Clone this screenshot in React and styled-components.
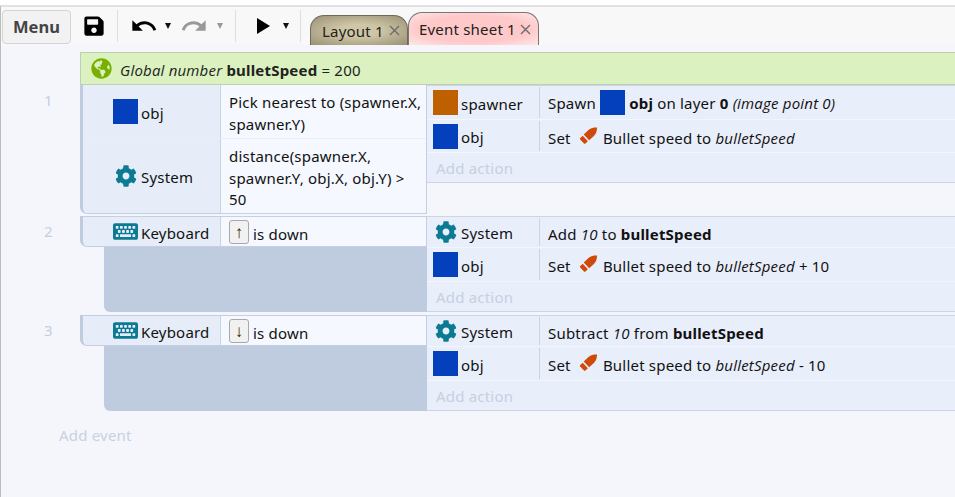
import React from "react";
import styled, { createGlobalStyle } from "styled-components";
import { FaCog, FaKeyboard, FaSave, FaGlobeAmericas } from "react-icons/fa";
import { MdUndo, MdRedo } from "react-icons/md";

const Global = createGlobalStyle`
  *, *::before, *::after { box-sizing: border-box; }
  html, body { margin: 0; padding: 0; background: #fff; }
  body { font-family: "Noto Sans", "Open Sans", sans-serif; font-size: 15px; letter-spacing: 0.2px; color: #111; }
  i { font-family: "Open Sans", "Noto Sans", sans-serif; }
`;

const Page = styled.div`
  width: 955px; height: 497px; overflow: hidden; display: flex; flex-direction: column;
  padding-top: 5px; background: #fff;
`;
const Main = styled.div`
  flex: 1; display: flex; flex-direction: column; border-top: 2px solid #e0e0e6; border-left: 1px solid #bbb;
`;
const Toolbar = styled.div`
  height: 38px; background: #f8f8f8; display: flex; align-items: flex-end; flex: none;
`;
const Tools = styled.div`
  display: flex; align-items: center; height: 38px;
`;
const MenuButton = styled.div`
  width: 69px; height: 34px; margin: 1px 0 0 1px; border: 1px solid #d4d4d4; border-radius: 4px;
  background: #f2f2f2; color: #444; font-weight: 700; font-size: 16.5px; letter-spacing: 0; display: flex; align-items: center; justify-content: center;
`;
const Tool = styled.div`
  display: flex; align-items: center; justify-content: center; color: ${p => p.$off ? "#999" : "#000"};
  width: ${p => p.$w || 24}px; height: 32px; margin-left: ${p => p.$ml || 0}px;
`;
const Caret = styled.div`
  width: 0; height: 0; margin: 0 ${p => p.$mr || 0}px 0 ${p => p.$ml || 0}px; border-left: 3.5px solid transparent; border-right: 3.5px solid transparent;
  border-top: 6px solid ${p => p.$off ? "#999" : "#111"};
`;
const Sep = styled.div`
  width: 1px; height: 32px; background: #ddd;
`;
const Tabs = styled.div`
  display: flex; align-items: flex-end; height: 38px; margin-left: 9px;
`;
const Tab = styled.div`
  display: flex; align-items: center; justify-content: space-between;
  width: ${p => p.$w}px; height: ${p => p.$h}px; padding: 0 7px 0 ${p => p.$pl}px;
  border: 1px solid ${p => p.$active ? "#777" : "#6e6a5c"}; border-bottom: none; border-radius: 14px 14px 0 0;
  background: ${p => p.$active
    ? "radial-gradient(ellipse at center, #ffc9c9 60%, #ffe6e6 100%)"
    : "radial-gradient(ellipse at center, #cfc6a6 30%, #9a9176 100%)"};
  color: #222;
`;
const Close = styled.svg`
  width: 11px; height: 11px; stroke: #6b6b6b; stroke-width: 1.4; flex: none;
`;
const Sheet = styled.div`
  flex: 1; background: #f5f6fc; padding-top: 7px; display: flex; flex-direction: column;
`;
const GlobalVar = styled.div`
  margin-left: 79px; height: 33px; background: #dbf2c0; border: 1px solid #bfd0b0; border-right: none;
  display: flex; align-items: center; padding-left: 10px; gap: 8px; color: #222;
`;
const GlobalText = styled.span`
  padding-top: 2px;
`;
const Event = styled.div`
  display: grid; grid-template-columns: 79px 347px 1fr; margin-bottom: ${p => p.$mb}px;
`;
const Num = styled.div`
  color: #c4cede; padding: 5px 0 0 43px;
`;
const CondCol = styled.div`
  display: flex; flex-direction: column;
`;
const CondBox = styled.div`
  background: #f5f8ff; border: 1px solid #c3cfe3; border-left: 3px solid #bfcbdf; border-top: ${p => p.$top ? "1px solid #c3cfe3" : "none"};
  border-radius: 0 0 0 7px; overflow: hidden;
`;
const CondRow = styled.div`
  display: grid; grid-template-columns: 138px 1fr; min-height: ${p => p.$h}px;
  & + & { border-top: 1px solid #e8edf8; }
`;
const CondObj = styled.div`
  background: #e6edf8; border-right: 1px solid #c8d3e6; display: flex; align-items: center; padding-left: 30px; gap: 3px;
`;
const Label = styled.span`
  padding-top: 2px;
`;
const KeyLabel = styled.span`
  padding-top: 4px;
`;
const CondParam = styled.div`
  padding: 7px 3px 0 8px; line-height: 21.7px;
`;
const KeyParam = styled.div`
  padding: 0 3px 0 8px; display: flex; align-items: center; gap: 4px;
`;
const Sub = styled.div`
  flex: 1; margin-left: 24px; background: #bfcbdf; border-radius: 0 0 0 6px;
`;
const ActCol = styled.div`
  display: flex; flex-direction: column; align-self: stretch;
`;
const ActBox = styled.div`
  background: #e9eefb; border-top: 1px solid #ccd5e8; border-bottom: 1px solid #ccd5e8;
`;
const ActRow = styled.div`
  display: grid; grid-template-columns: 113px 1fr; height: ${p => p.$h}px; border-bottom: 1px solid #f2f5fd;
`;
const ActObj = styled.div`
  display: flex; align-items: center; gap: 3px; padding-left: ${p => p.$pl || 6}px; border-right: 1px solid #c8d3e6; margin: 1px 0;
`;
const ActParam = styled.div`
  display: flex; align-items: center; padding: 3px 0 0 8px; white-space: pre;
`;
const Add = styled.div`
  color: #c6d0e2; height: 29px; line-height: 31px; padding-left: 9px;
`;
const AddEvent = styled.div`
  color: #c8d1e3; padding: 14px 0 0 58px;
`;
const Swatch = styled.div`
  width: 25px; height: 25px; flex: none; background: ${p => p.$c || "#0440bb"};
`;
const InlineSwatch = styled(Swatch)`
  display: inline-block; vertical-align: middle; margin-top: -6px;
`;
const KeyCap = styled.div`
  width: 20px; height: 24px; border: 1px solid #a8a8a8; border-radius: 3px; background: #f1f1f1;
  display: flex; align-items: center; justify-content: center; font-size: 17px; color: #3a2000;
`;
const Gear = styled(FaCog)` color: #0d7a94; font-size: 22px; margin-left: ${p => p.$ml || 0}px; margin-right: 1px; flex: none; `;
const Keys = styled(FaKeyboard)` color: #0d7a94; font-size: 25px; flex: none; `;
const Globe = styled(FaGlobeAmericas)` color: #79b000; font-size: 21px; flex: none; `;
const BulletIcon = styled.svg`
  display: inline-block; vertical-align: middle; margin: -9px 0 0 4px; overflow: visible;
`;

const X = () => <Close viewBox="0 0 11 11"><path d="M1 1 L10 10 M10 1 L1 10" /></Close>;
const Bullet = () => (
  <BulletIcon width="20" height="20" viewBox="0 0 20 20">
    <g transform="rotate(47 10 10)" fill="#cf4a08">
      <path d="M6 13.5 V7 C6 3 8.5 0.5 10 -1 C11.5 0.5 14 3 14 7 V13.5 Z" />
      <path d="M6.2 15 H13.8 V18.5 Q13.8 19.5 12.8 19.5 H7.2 Q6.2 19.5 6.2 18.5 Z" />
    </g>
  </BulletIcon>
);
const Obj = ({ c, name }) => <><Swatch $c={c} /><Label>{name}</Label></>;
const Sys = () => <ActObj $pl={8}><Gear /><Label>System</Label></ActObj>;
const SetSpeed = ({ tail }) => (
  <ActParam><span>Set <Bullet /> Bullet speed to <i>bulletSpeed</i>{tail}</span></ActParam>
);

export default function App() {
  return (
    <Page>
      <Global />
      <Main>
        <Toolbar>
          <Tools>
            <MenuButton>Menu</MenuButton>
            <Tool $w={46}><FaSave size={22} /></Tool>
            <Sep />
            <Tool $w={36} $ml={8}><MdUndo size={28} /></Tool>
            <Caret $ml={3} $mr={9} />
            <Tool $off $w={28}><MdRedo size={28} /></Tool>
            <Caret $off $ml={9} $mr={12} />
            <Sep />
            <Tool $w={24} $ml={15}><svg width="15" height="16" viewBox="0 0 15 16"><path d="M1 0 L14 8 L1 16 Z" fill="#000" /></svg></Tool>
            <Caret $ml={8} $mr={11} />
            <Sep />
          </Tools>
          <Tabs>
            <Tab $w={98} $h={30} $pl={11}>Layout 1<X /></Tab>
            <Tab $active $w={131} $h={33} $pl={10}>Event sheet 1<X /></Tab>
          </Tabs>
        </Toolbar>
        <Sheet>
          <GlobalVar>
            <Globe />
            <GlobalText><i>Global number</i> <b>bulletSpeed</b> = 200</GlobalText>
          </GlobalVar>
          <Event $mb={2}>
            <Num>1</Num>
            <CondCol>
              <CondBox>
                <CondRow $h={53}>
                  <CondObj><Obj name="obj" /></CondObj>
                  <CondParam>Pick nearest to (spawner.X, spawner.Y)</CondParam>
                </CondRow>
                <CondRow $h={75}>
                  <CondObj><Gear $ml={2} /><Label>System</Label></CondObj>
                  <CondParam>distance(spawner.X, spawner.Y, obj.X, obj.Y) &gt; 50</CondParam>
                </CondRow>
              </CondBox>
            </CondCol>
            <ActCol>
              <ActBox>
                <ActRow $h={34}>
                  <ActObj><Obj c="#bf6000" name="spawner" /></ActObj>
                  <ActParam><span>Spawn <InlineSwatch /> <b>obj</b> on layer <b>0</b> <i>(image point 0)</i></span></ActParam>
                </ActRow>
                <ActRow $h={33}>
                  <ActObj><Obj name="obj" /></ActObj>
                  <SetSpeed />
                </ActRow>
                <Add>Add action</Add>
              </ActBox>
            </ActCol>
          </Event>
          <Event $mb={3}>
            <Num>2</Num>
            <CondCol>
              <CondBox $top>
                <CondRow $h={29}>
                  <CondObj><Keys /><Label>Keyboard</Label></CondObj>
                  <KeyParam><KeyCap>↑</KeyCap><KeyLabel>is down</KeyLabel></KeyParam>
                </CondRow>
              </CondBox>
              <Sub />
            </CondCol>
            <ActCol>
              <ActBox>
                <ActRow $h={31}><Sys /><ActParam><span>Add <i>10</i> to <b>bulletSpeed</b></span></ActParam></ActRow>
                <ActRow $h={34}><ActObj><Obj name="obj" /></ActObj><SetSpeed tail=" + 10" /></ActRow>
                <Add>Add action</Add>
              </ActBox>
            </ActCol>
          </Event>
          <Event $mb={0}>
            <Num>3</Num>
            <CondCol>
              <CondBox $top>
                <CondRow $h={29}>
                  <CondObj><Keys /><Label>Keyboard</Label></CondObj>
                  <KeyParam><KeyCap>↓</KeyCap><KeyLabel>is down</KeyLabel></KeyParam>
                </CondRow>
              </CondBox>
              <Sub />
            </CondCol>
            <ActCol>
              <ActBox>
                <ActRow $h={31}><Sys /><ActParam><span>Subtract <i>10</i> from <b>bulletSpeed</b></span></ActParam></ActRow>
                <ActRow $h={34}><ActObj><Obj name="obj" /></ActObj><SetSpeed tail=" - 10" /></ActRow>
                <Add>Add action</Add>
              </ActBox>
            </ActCol>
          </Event>
          <AddEvent>Add event</AddEvent>
        </Sheet>
      </Main>
    </Page>
  );
}
